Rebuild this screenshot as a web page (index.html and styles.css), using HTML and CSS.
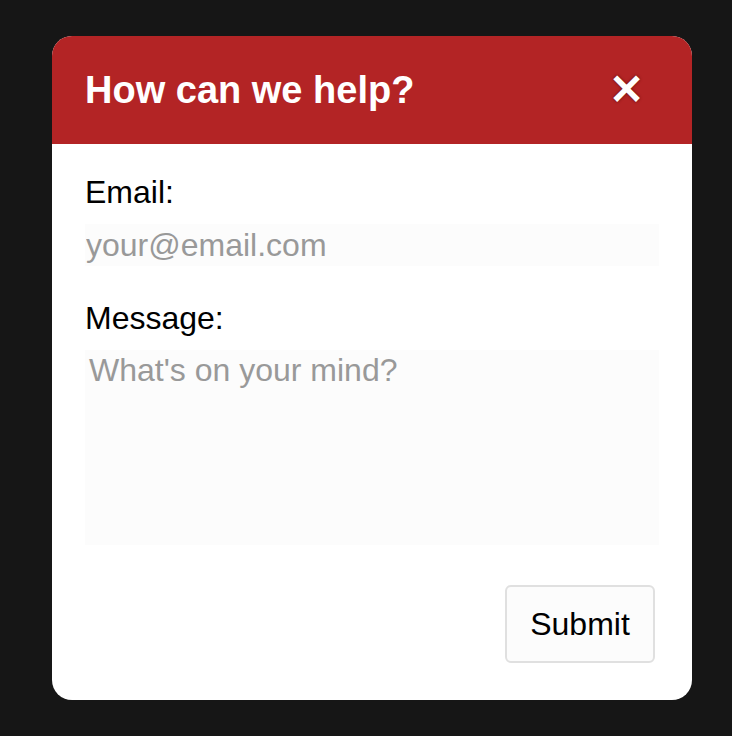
FILE: index.html
```html
<!DOCTYPE html>
<html>
<head>
<meta charset="utf-8">
<link rel="stylesheet" href="styles.css">
</head>
<body>
<div class="modal">
  <div class="modal-header">
    <h1 class="title">How can we help?</h1>
    <span class="close">✕</span>
  </div>
  <form class="modal-body">
    <label class="label" for="email">Email:</label>
    <input class="field" id="email" type="text" placeholder="your@email.com">
    <label class="label label-msg" for="msg">Message:</label>
    <textarea class="field area" id="msg" placeholder="What's on your mind?"></textarea>
    <div class="actions">
      <button class="submit" type="button">Submit</button>
    </div>
  </form>
</div>
</body>
</html>
```
FILE: styles.css
```css
html, body {
  margin: 0;
  padding: 0;
  background: #161616;
  height: 100%;
}
body {
  padding: 36px 40px 36px 52px;
  box-sizing: border-box;
  font-family: "Liberation Sans", Arial, sans-serif;
}
.modal {
  width: 640px;
  height: 664px;
  background: #fff;
  border-radius: 20px;
  overflow: hidden;
  display: flex;
  flex-direction: column;
}
.modal-header {
  background: #b32425;
  height: 108px;
  flex: none;
  display: flex;
  align-items: center;
  justify-content: space-between;
  padding: 0 48px 0 33px;
  box-sizing: border-box;
}
.title {
  margin: 0;
  color: #fff;
  font-size: 38px;
  font-weight: bold;
  letter-spacing: 0;
}
.close {
  color: #fff;
  font-size: 42px;
  line-height: 42px;
  font-weight: bold;
  text-shadow: 0 0 3px #5a0c0c;
}
.modal-body {
  padding: 30px 33px 37px 33px;
  display: flex;
  flex-direction: column;
  flex: 1;
}
.label {
  font-size: 32px;
  color: #000;
  line-height: 37px;
}
.label-msg {
  margin-top: 34px;
}
.field {
  margin-top: 13px;
  border: none;
  outline: none;
  background: #fcfcfc;
  font-family: "Liberation Sans", Arial, sans-serif;
  font-size: 32px;
  height: 42px;
  padding: 0 1px;
  box-sizing: border-box;
  color: #000;
  flex: none;
}
.field::placeholder {
  color: #999;
}
.area {
  height: 195px;
  resize: none;
  padding: 2px 4px;
  line-height: 37px;
}
.actions {
  margin-top: auto;
  display: flex;
  justify-content: flex-end;
  padding-right: 4px;
}
.submit {
  width: 150px;
  height: 78px;
  background: #fcfcfc;
  border: 2px solid #e0e0e0;
  border-radius: 6px;
  font-family: "Liberation Sans", Arial, sans-serif;
  font-size: 32px;
  color: #000;
}
```
